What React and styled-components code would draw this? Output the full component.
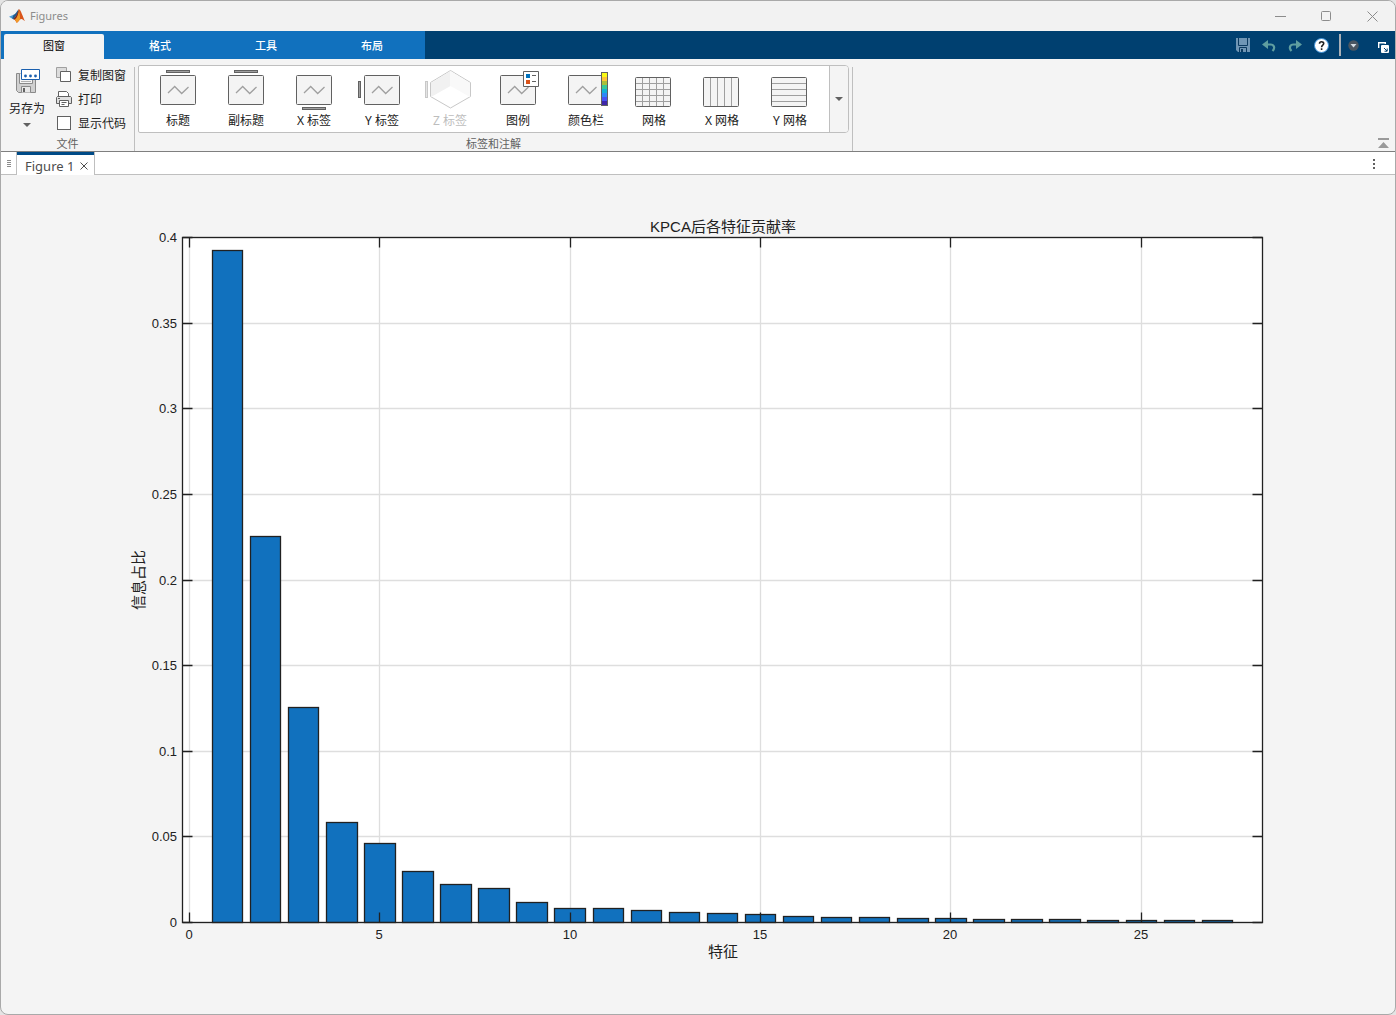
import React, { useState } from 'react';
import styled, { createGlobalStyle } from 'styled-components';

const GlobalStyle = createGlobalStyle`
  * {
    box-sizing: border-box;
  }

  body {
    margin: 0;
    background-color: #e4e4e4;
    font-family: 'Noto Sans', 'Noto Sans CJK SC', sans-serif;
    font-size: 12px;
    color: #212121;
  }

  button {
    border: 0;
    padding: 0;
    background: none;
    font: inherit;
    color: inherit;
  }

  svg {
    display: block;
  }
`;

const Window = styled.div`
  display: flex;
  flex-direction: column;
  min-height: 100vh;
  border: 1px solid #a9a9a9;
  border-radius: 8px;
  background-color: #f4f4f4;
  overflow: hidden;
`;

const TitleBar = styled.header`
  display: flex;
  align-items: center;
  height: 30px;
  padding-left: 8px;
  background-color: #f2f2f2;
`;

const WindowTitle = styled.h1`
  flex: 1;
  margin: 0 0 0 5px;
  font-size: 11px;
  font-weight: 400;
  line-height: 16px;
  color: #8c8c8c;
`;

const WindowButton = styled.button`
  display: flex;
  align-items: center;
  justify-content: center;
  width: 46px;
  height: 30px;
`;

const TabBar = styled.nav`
  display: flex;
  height: 28px;
  background-color: #004070;
`;

const TabGroup = styled.div`
  display: flex;
  align-items: flex-end;
  padding-left: 3px;
  background-color: #1171be;
`;

const Tab = styled.button`
  width: 106px;
  height: 25px;
  padding-bottom: 2px;
  font-size: 11px;
  font-weight: ${(props) => (props.$active ? 400 : 500)};
  line-height: 23px;
  color: ${(props) => (props.$active ? '#000' : '#fff')};
  ${(props) => props.$active && `
    width: 100px;
    margin-right: 3px;
    border-radius: 2px 2px 0 0;
    background-color: #f4f4f4;
  `}
`;

const QuickAccess = styled.div`
  display: flex;
  align-items: center;
  margin-left: auto;
  padding-right: 3px;
`;

const QuickButton = styled.button`
  display: flex;
  align-items: center;
  justify-content: center;
  width: ${(props) => props.$width || 26}px;
  height: 28px;
`;

const UndockButton = styled(QuickButton)`
  margin-left: 14px;
`;

const QuickDivider = styled.div`
  width: 2px;
  height: 22px;
  margin: 0 3px 0 5px;
  background-color: #a9b0b7;
`;

const Toolstrip = styled.div`
  display: flex;
  height: 93px;
  border-bottom: 1px solid #7f7f7f;
`;

const Section = styled.section`
  display: flex;
  flex-direction: column;
  justify-content: space-between;
`;

const SectionBody = styled.div`
  display: flex;
  padding: 4px 8px 0 4px;
`;

const SectionLabel = styled.h2`
  margin: 0;
  font-size: 11px;
  font-weight: 400;
  line-height: 14px;
  text-align: center;
  color: #616161;
`;

const Separator = styled.div`
  width: 1px;
  margin: 8px 3px 0 ${(props) => (props.$spaced ? 3 : 0)}px;
  background-color: #bfbfbf;
`;

const SaveButton = styled.button`
  display: flex;
  flex-direction: column;
  align-items: center;
  width: 44px;
  padding-top: 6px;
  line-height: 18px;

  & span {
    margin: 6px 0 5px;
  }
`;

const Commands = styled.div`
  display: flex;
  flex-direction: column;
  padding-left: 7px;
`;

const Command = styled.button`
  display: flex;
  align-items: center;
  gap: 6px;
  height: 24px;
  line-height: 16px;

  & span {
    padding-top: 2px;
  }
`;

const CheckBox = styled.input`
  appearance: none;
  width: 14px;
  height: 14px;
  margin: 0 1px;
  border: 1px solid #616161;
  background-color: #fff;

  &:checked {
    background-color: #1171be;
  }
`;

const Gallery = styled.div`
  display: flex;
  height: 68px;
  margin-top: 6px;
  border: 1px solid #bfbfbf;
  border-radius: 2px 4px 4px 2px;
  background-color: #fff;
  overflow: hidden;
`;

const GalleryItems = styled.div`
  display: flex;
  padding: 0 5px;
`;

const GalleryItem = styled.button`
  display: flex;
  flex-direction: column;
  align-items: center;
  width: 68px;
  line-height: 18px;
  color: ${(props) => (props.disabled ? '#bdbdbd' : '#212121')};
`;

const GalleryMore = styled.button`
  display: flex;
  align-items: center;
  justify-content: center;
  width: 19px;
  border-left: 1px solid #bfbfbf;
  background-color: #f4f4f4;
`;

const CollapseButton = styled.button`
  align-self: flex-end;
  margin: 0 6px 3px auto;
`;

const DocumentBar = styled.div`
  display: flex;
  height: 23px;
  background-color: #fff;
`;

const DocumentHandle = styled.div`
  display: flex;
  align-items: center;
  justify-content: center;
  width: 15px;
  padding-top: 2px;
  border-bottom: 1px solid #bfbfbf;
`;

const DocumentTab = styled.div`
  display: flex;
  align-items: center;
  justify-content: space-between;
  width: 79px;
  padding: 4px 6px 0 8px;
  border: solid #bfbfbf;
  border-width: 0 1px;
  box-shadow: inset 0 3px #004b87;
  font-size: 13px;
  line-height: 18px;
  white-space: nowrap;
  color: #4d4d4d;
`;

const DocumentActions = styled.div`
  display: flex;
  flex: 1;
  align-items: center;
  justify-content: flex-end;
  padding: 2px 17px 0 0;
  border-bottom: 1px solid #bfbfbf;
`;

const Figure = styled.main`
  display: flex;
  flex: 1;
`;

const Chart = styled.svg`
  width: 100%;
  height: auto;
  font-family: 'Liberation Sans', 'Noto Sans CJK SC', sans-serif;
  fill: #212121;
`;

const TickLabel = styled.text`
  font-size: 13px;
`;

const AxisTitle = styled.text`
  font-size: 15px;
  text-anchor: middle;
`;

const MatlabLogo = () => (
  <svg width="16" height="16" viewBox="0 0 16 16" aria-hidden="true">
    <path d="M0 8.8 4.6 6.8 6.6 8.7 4.3 11.2Z" fill="#4a9ad6" />
    <path d="M4.6 6.8C6.6 6.2 7.8 2.7 9.8 1.2L9 6.2 4.3 11.2 3.2 10.3Z" fill="#245a8c" />
    <path d="M9.8 1.2C8.7 4.5 7.8 8.7 4.3 11.2 6 10.9 6.5 13 7.6 14.8 10 14.2 10.3 10.8 12.3 11 13.6 11 14.6 12.4 16 13.2 14 9.5 11.7 1 9.8 1.2Z" fill="#d9541a" />
    <path d="M9.8 1.2C9.5 5.5 8.4 9.9 5.9 11.6 6.7 12.3 7 13.8 7.6 14.8 9.3 13.7 10.2 12 11.2 11.2 11 7.8 10.4 3.8 9.8 1.2Z" fill="#f19a27" />
    <path d="M9.8 1.2C9 4.2 7.7 8.6 4.3 11.2L5.7 11.5C8.4 9 9.6 5.5 9.8 1.2Z" fill="#72251f" />
  </svg>
);

const Caret = () => (
  <svg width="8" height="4" viewBox="0 0 8 4" aria-hidden="true">
    <path d="M0 0H8L4 4Z" fill="#616161" />
  </svg>
);

const SaveAsIcon = () => (
  <svg width="26" height="25" viewBox="0 0 26 25" aria-hidden="true">
    <path d="M2.5 4.5H21.5V23.5H4.5L2.5 21.5Z" fill="#d0d0d0" stroke="#8a8a8a" />
    <path d="M5.5 4.5V14.5H18.5V4.5" fill="#f4f4f4" stroke="#8a8a8a" />
    <path d="M7 12.5H17" stroke="#b0b0b0" />
    <path d="M7.5 23.5V17.5H16.5V23.5" fill="#e8e8e8" stroke="#8a8a8a" />
    <path d="M9 19H11V23H9Z" fill="#616161" />
    <path d="M7.5.5H25.5V10.5H7.5Z" fill="#fff" stroke="#1a5fae" />
    <circle cx="11.5" cy="7" r="1.4" fill="#1a5fae" />
    <circle cx="16.5" cy="7" r="1.4" fill="#1a5fae" />
    <circle cx="21.5" cy="7" r="1.4" fill="#1a5fae" />
  </svg>
);

const CopyIcon = () => (
  <svg width="16" height="16" viewBox="0 0 16 16" aria-hidden="true">
    <path d="M.5.5H10.5V10.5H.5Z" fill="#dcdcdc" stroke="#a0a0a0" />
    <path d="M4.5 4.5H14.5V14.5H4.5Z" fill="#fff" stroke="#616161" />
  </svg>
);

const PrintIcon = () => (
  <svg width="16" height="16" viewBox="0 0 16 16" fill="#fff" stroke="#616161" aria-hidden="true">
    <path d="M2.5 6V.5H10.5L12.5 2.5V6" />
    <path d="M1.5 5.5H14.5L15.5 6.5V12.5H.5V6.5Z" fill="#e0e0e0" />
    <path d="M3.5 9.5H12.5V15.5H3.5Z" />
    <path d="M2 7.5H4M5.5 11.5H10.5M5.5 13.5H8.5" />
  </svg>
);

const GalleryIcon = ({ children }) => (
  <svg width="68" height="46" viewBox="0 0 68 46" fill="none" stroke="#616161" aria-hidden="true">
    {children}
  </svg>
);

const PlotFrame = () => (
  <>
    <rect x="16.5" y="9.5" width="35" height="29" rx="1" fill="#f4f4f4" />
    <path d="M24 27 30.7 20.5 37.7 27.5 44.5 21" stroke="#a0a0a0" strokeWidth="1.3" />
  </>
);

const TopBar = () => <rect x="22.5" y="4.5" width="23" height="2" fill="#9f9f9f" />;

const SideBar = (props) => <rect x="10.5" y="15.5" width="2" height="16" fill="#9f9f9f" {...props} />;

const gridX = 'M22.5 12V40M29.5 12V40M36.5 12V40M43.5 12V40';
const gridY = 'M16 17.5H50M16 23.5H50M16 29.5H50M16 35.5H50';

const GridFrame = ({ lines }) => (
  <>
    <rect x="15.5" y="11.5" width="35" height="29" rx="1" fill="#f4f4f4" stroke="none" />
    <path d={lines} stroke="#9f9f9f" />
    <rect x="15.5" y="11.5" width="35" height="29" rx="1" />
  </>
);

const parula = ['#f9fb15', '#fec338', '#a9be3b', '#37c897', '#12b1d6', '#2e87f7', '#4852f4', '#3e26a8'];

const galleryItems = [
  { label: '标题', icon: <><PlotFrame /><TopBar /></> },
  { label: '副标题', icon: <><PlotFrame /><TopBar /></> },
  { label: 'X 标签', icon: <><PlotFrame /><rect x="22.5" y="41.5" width="23" height="2" fill="#9f9f9f" /></> },
  { label: 'Y 标签', icon: <><PlotFrame /><SideBar /></> },
  {
    label: 'Z 标签',
    disabled: true,
    icon: (
      <g stroke="#c8c8c8">
        <path d="M34.5 4.5 54.5 16.5V30.5L34.5 42 14.5 30.5V16.5Z" fill="#fff" />
        <path d="M34.5 5V20L15 31V17Z" fill="#f1f1f1" stroke="none" />
        <path d="M34.5 5V20L54 31V17Z" fill="#f9f9f9" stroke="none" />
        <SideBar x="9.5" fill="#e4e4e4" />
      </g>
    ),
  },
  {
    label: '图例',
    icon: (
      <>
        <PlotFrame />
        <path d="M39.5 5.5H54.5V20.5H39.5Z" fill="#fff" />
        <path d="M42 8H46V12H42Z" fill="#0072bd" stroke="none" />
        <path d="M42 14H46V18H42Z" fill="#d95319" stroke="none" />
        <path d="M48 9.5H52M48 15.5H52" />
      </>
    ),
  },
  {
    label: '颜色栏',
    icon: (
      <>
        <PlotFrame />
        {parula.map((color, i) => (
          <rect key={color} x="50" y={7 + i * 4} width="5" height="4" fill={color} stroke="none" />
        ))}
        <rect x="49.5" y="6.5" width="6" height="33" />
      </>
    ),
  },
  { label: '网格', icon: <GridFrame lines={gridX + gridY} /> },
  { label: 'X 网格', icon: <GridFrame lines={gridX} /> },
  { label: 'Y 网格', icon: <GridFrame lines={gridY} /> },
];

// Contribution of each KPCA feature
const contributions = [
  0.3924, 0.2254, 0.1255, 0.0584, 0.0461, 0.0298, 0.0222, 0.0199, 0.0117,
  0.0082, 0.0082, 0.007, 0.0058, 0.0053, 0.0047, 0.0035, 0.0029, 0.0029,
  0.0023, 0.0023, 0.0018, 0.0018, 0.0018, 0.0012, 0.0012, 0.0012, 0.0012,
];

const xTicks = [0, 5, 10, 15, 20, 25];
const yTicks = [0, 0.05, 0.1, 0.15, 0.2, 0.25, 0.3, 0.35, 0.4];

const plot = { left: 181, right: 1261, top: 62, bottom: 747 };
const scaleX = (value) => Math.round(188 + value * 38.07);
const scaleY = (value) => Math.round(plot.bottom - (value / 0.4) * (plot.bottom - plot.top));

const ContributionChart = () => (
  <Chart viewBox="0 0 1394 839" role="img" aria-label="KPCA后各特征贡献率">
    <g transform="translate(0.5 0.5)" stroke="#212121" strokeWidth="1.3" fill="none">
      <rect
        x={plot.left}
        y={plot.top}
        width={plot.right - plot.left}
        height={plot.bottom - plot.top}
        fill="#fff"
        stroke="none"
      />
      {xTicks.map((tick) => (
        <path key={tick} d={`M${scaleX(tick)} ${plot.top}V${plot.bottom}`} stroke="#dedede" />
      ))}
      {yTicks.map((tick) => (
        <path key={tick} d={`M${plot.left} ${scaleY(tick)}H${plot.right}`} stroke="#dedede" />
      ))}
      {contributions.map((value, i) => {
        const left = scaleX(i + 0.6);
        return (
          <rect
            key={i}
            x={left}
            y={scaleY(value)}
            width={scaleX(i + 1.4) - left}
            height={plot.bottom - scaleY(value)}
            fill="#1171be"
          />
        );
      })}
      {xTicks.map((tick) => (
        <path
          key={tick}
          d={`M${scaleX(tick)} ${plot.top}v10M${scaleX(tick)} ${plot.bottom}v-10`}
        />
      ))}
      {yTicks.map((tick) => (
        <path
          key={tick}
          d={`M${plot.left} ${scaleY(tick)}h10M${plot.right} ${scaleY(tick)}h-10`}
        />
      ))}
      <rect
        x={plot.left}
        y={plot.top}
        width={plot.right - plot.left}
        height={plot.bottom - plot.top}
      />
    </g>
    {xTicks.map((tick) => (
      <TickLabel key={tick} x={scaleX(tick)} y={plot.bottom + 17} textAnchor="middle">{tick}</TickLabel>
    ))}
    {yTicks.map((tick) => (
      <TickLabel key={tick} x={plot.left - 5} y={scaleY(tick) + 5} textAnchor="end">{tick}</TickLabel>
    ))}
    <AxisTitle x="722" y="57">KPCA后各特征贡献率</AxisTitle>
    <AxisTitle x="722" y="782">特征</AxisTitle>
    <AxisTitle transform="translate(143 405) rotate(-90)">信息占比</AxisTitle>
  </Chart>
);

const tabs = ['图窗', '格式', '工具', '布局'];

const App = () => {
  const [activeTab, setActiveTab] = useState('图窗');
  const [showCode, setShowCode] = useState(false);

  return (
    <Window>
      <GlobalStyle />
      <TitleBar>
        <MatlabLogo />
        <WindowTitle>Figures</WindowTitle>
        <WindowButton aria-label="最小化">
          <svg width="11" height="11" stroke="#8c8c8c"><path d="M0 5.5H11" /></svg>
        </WindowButton>
        <WindowButton aria-label="最大化">
          <svg width="11" height="11" fill="none" stroke="#8c8c8c"><rect x=".5" y=".5" width="9" height="9" rx="1" /></svg>
        </WindowButton>
        <WindowButton aria-label="关闭">
          <svg width="11" height="11" stroke="#8c8c8c"><path d="M.5.5 10.5 10.5M10.5.5.5 10.5" /></svg>
        </WindowButton>
      </TitleBar>

      <TabBar>
        <TabGroup>
          {tabs.map((tab) => (
            <Tab key={tab} $active={tab === activeTab} onClick={() => setActiveTab(tab)}>{tab}</Tab>
          ))}
        </TabGroup>
        <QuickAccess>
          <QuickButton aria-label="保存">
            <svg width="14" height="14" viewBox="0 0 14 14">
              <path d="M0 0H14V14H2L0 12Z" fill="#6f96b5" />
              <path d="M2.5 0V7.5H11.5V0M3.5 14V9.5H10.5V14" fill="none" stroke="#0b3a60" />
              <path d="M5 11H7V14H5Z" fill="#0b3a60" />
            </svg>
          </QuickButton>
          <QuickButton aria-label="撤销">
            <svg width="14" height="14" viewBox="0 0 14 14">
              <path d="M4 6.5H8.5C12 6.5 13.5 10 10.5 13" fill="none" stroke="#5f9ea0" strokeWidth="2.2" />
              <path d="M0 6.5 6 2V11Z" fill="#5f9ea0" />
            </svg>
          </QuickButton>
          <QuickButton aria-label="重做">
            <svg width="14" height="14" viewBox="0 0 14 14">
              <path d="M10 6.5H5.5C2 6.5 .5 10 3.5 13" fill="none" stroke="#5f9ea0" strokeWidth="2.2" />
              <path d="M14 6.5 8 2V11Z" fill="#5f9ea0" />
            </svg>
          </QuickButton>
          <QuickButton aria-label="帮助">
            <svg width="15" height="15" viewBox="0 0 15 15">
              <circle cx="7.5" cy="7.5" r="7" fill="#fff" stroke="#3a8fd6" />
              <path d="M5.5 5.7C5.5 3.2 9.7 3.2 9.7 5.6 9.7 7.2 7.6 7.2 7.6 9.2M7.6 10.3V12" fill="none" stroke="#222" strokeWidth="1.6" />
            </svg>
          </QuickButton>
          <QuickDivider />
          <QuickButton $width={18} aria-label="更多">
            <svg width="11" height="11" viewBox="0 0 11 11">
              <circle cx="5.5" cy="5.5" r="5.2" fill="#4a5661" />
              <path d="M2.5 4H8.5L5.5 7.5Z" fill="#d5dde4" />
            </svg>
          </QuickButton>
          <UndockButton $width={16} aria-label="取消停靠">
            <svg width="12" height="18" viewBox="0 0 12 18">
              <path d="M.7 12V6.7H7.3V8" fill="none" stroke="#fff" strokeWidth="1.4" />
              <rect x="3" y="9" width="8" height="8" rx="1" fill="#fff" />
              <path d="M6 12 9 15M9.2 12.5V15.2H6.5" fill="none" stroke="#004070" />
            </svg>
          </UndockButton>
        </QuickAccess>
      </TabBar>

      <Toolstrip>
        <Section>
          <SectionBody>
            <SaveButton>
              <SaveAsIcon />
              <span>另存为</span>
              <Caret />
            </SaveButton>
            <Commands>
              <Command><CopyIcon /><span>复制图窗</span></Command>
              <Command><PrintIcon /><span>打印</span></Command>
              <Command as="label">
                <CheckBox type="checkbox" checked={showCode} onChange={(e) => setShowCode(e.target.checked)} />
                <span>显示代码</span>
              </Command>
            </Commands>
          </SectionBody>
          <SectionLabel>文件</SectionLabel>
        </Section>
        <Separator />
        <Section>
          <Gallery>
            <GalleryItems>
              {galleryItems.map(({ label, icon, disabled }) => (
                <GalleryItem key={label} disabled={disabled}>
                  <GalleryIcon>{icon}</GalleryIcon>
                  {label}
                </GalleryItem>
              ))}
            </GalleryItems>
            <GalleryMore aria-label="更多选项"><Caret /></GalleryMore>
          </Gallery>
          <SectionLabel>标签和注解</SectionLabel>
        </Section>
        <Separator $spaced />
        <CollapseButton aria-label="折叠工具条">
          <svg width="11" height="10" viewBox="0 0 11 10" fill="#9a9a9a">
            <path d="M0 0H11V2H0ZM0 10H11L5.5 4Z" />
          </svg>
        </CollapseButton>
      </Toolstrip>

      <DocumentBar>
        <DocumentHandle>
          <svg width="4" height="8" stroke="#8c8c8c"><path d="M0 .5H4M0 2.5H4M0 4.5H4M0 6.5H4" /></svg>
        </DocumentHandle>
        <DocumentTab>
          Figure 1
          <button aria-label="关闭 Figure 1">
            <svg width="8" height="8" stroke="#4d4d4d"><path d="M.5.5 7.5 7.5M7.5.5.5 7.5" /></svg>
          </button>
        </DocumentTab>
        <DocumentActions>
          <button aria-label="文档操作">
            <svg width="8" height="10" fill="#616161"><path d="M3 0H5V2H3ZM3 4H5V6H3ZM3 8H5V10H3Z" /></svg>
          </button>
        </DocumentActions>
      </DocumentBar>

      <Figure>
        <ContributionChart />
      </Figure>
    </Window>
  );
};

export default App;
